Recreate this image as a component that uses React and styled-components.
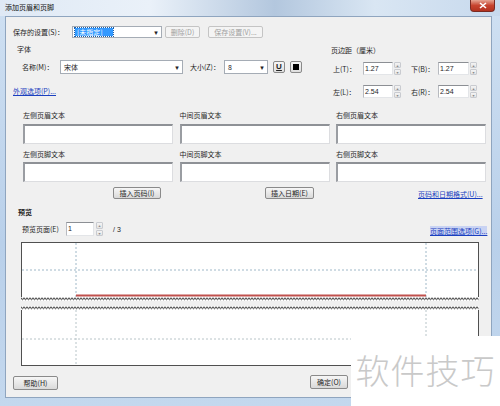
import React from "react"
import styled, { createGlobalStyle } from "styled-components"

const GlobalStyle = createGlobalStyle`
  html, body {
    margin: 0;
    padding: 0;
    background: #fff;
  }
  body {
    font-family: "Noto Sans CJK SC", "DejaVu Sans", sans-serif;
    font-size: 7px;
    color: #1e1e1e;
  }
`

// fine page-break zigzag drawn under/over the preview pages
const Zigzag = ({ width }) => {
  const dark = []
  const light = []
  for (let i = 0; i * 1.5 <= width; i++) {
    const x = i * 1.5
    const y = i % 2 === 0 ? 0.8 : 2.2
    dark.push(`${x},${y}`)
    light.push(`${x},${y + 1}`)
  }
  return (
    <svg width={width} height="4" style={{ display: "block" }}>
      <polyline points={light.join(" ")} fill="none" stroke="#8a8a8a" strokeWidth="0.7" />
      <polyline points={dark.join(" ")} fill="none" stroke="#1a1a1a" strokeWidth="0.9" />
    </svg>
  )
}

const App = () => {
  return (
    <>
      <GlobalStyle />
      <Window>
        <TitleBar>
          <TitleText>添加页眉和页脚</TitleText>
          <CloseButton>
            <svg width="8" height="7" viewBox="0 0 8 7">
              <path d="M1 1 L7 6 M7 1 L1 6" stroke="#fff" strokeWidth="1.6" />
            </svg>
          </CloseButton>
        </TitleBar>

        <Client>
          <SettingsRow>
            <Label w={59}>保存的设置(S)：</Label>
            <Select w={90}>
              <SelectedText>[未指定]</SelectedText>
              <Arrow>▾</Arrow>
            </Select>
            <Button w={35} ml={3} disabled>删除(D)</Button>
            <Button w={55} ml={8} disabled>保存设置(V)...</Button>
          </SettingsRow>

          <TopSection>
            <FontColumn>
              <GroupLabel>字体</GroupLabel>
              <FontRow>
                <Label w={38}>名称(M)：</Label>
                <Select w={123} white>
                  <ValueText>宋体</ValueText>
                  <Arrow>▾</Arrow>
                </Select>
                <Label w={34} ml={7}>大小(Z)：</Label>
                <Select w={44} white>
                  <ValueText>8</ValueText>
                  <Arrow>▾</Arrow>
                </Select>
                <SquareButton ml={5}>
                  <Underlined>U</Underlined>
                </SquareButton>
                <SquareButton ml={5}>
                  <Swatch />
                </SquareButton>
              </FontRow>
              <LinkText>外观选项(P)...</LinkText>
            </FontColumn>

            <MarginColumn>
              <MarginTitle>页边距（厘米）</MarginTitle>
              <MarginRow>
                <Label w={30}>上(T)：</Label>
                <NumInput w={30}>1.27</NumInput>
                <Spinner />
                <Label w={27} ml={10}>下(B)：</Label>
                <NumInput w={31}>1.27</NumInput>
                <Spinner />
              </MarginRow>
              <MarginRow second>
                <Label w={30}>左(L)：</Label>
                <NumInput w={30}>2.54</NumInput>
                <Spinner />
                <Label w={27} ml={10}>右(R)：</Label>
                <NumInput w={31}>2.54</NumInput>
                <Spinner />
              </MarginRow>
            </MarginColumn>
          </TopSection>

          <TextGrid>
            <FieldLabel>左侧页眉文本</FieldLabel>
            <FieldLabel>中间页眉文本</FieldLabel>
            <FieldLabel>右侧页眉文本</FieldLabel>
            <TextBox />
            <TextBox />
            <TextBox />
            <FieldLabel>左侧页脚文本</FieldLabel>
            <FieldLabel>中间页脚文本</FieldLabel>
            <FieldLabel>右侧页脚文本</FieldLabel>
            <TextBox />
            <TextBox />
            <TextBox />
          </TextGrid>

          <InsertRow>
            <Button w={48} ml={107}>插入页码(I)</Button>
            <Button w={49} ml={104}>插入日期(E)</Button>
            <LinkText inline ml={104}>页码和日期格式(U)...</LinkText>
          </InsertRow>

          <PreviewTitle>预览</PreviewTitle>

          <PageRow>
            <Label w={44}>预览页面(E)</Label>
            <NumInput w={28} tall>1</NumInput>
            <Spinner tall ml={2} />
            <Slash>/ 3</Slash>
            <LinkText inline selected ml={305}>页面范围选项(G)...</LinkText>
          </PageRow>

          <PreviewBox>
            <PageSvgTop width="456" height="54">
              <line x1="54" y1="0" x2="54" y2="54" stroke="#9fb8c8" strokeDasharray="2 2" />
              <line x1="404" y1="0" x2="404" y2="54" stroke="#9fb8c8" strokeDasharray="2 2" />
              <line x1="0" y1="27" x2="456" y2="27" stroke="#9fb8c8" strokeDasharray="2 2" />
              <line x1="54" y1="52.5" x2="404" y2="52.5" stroke="#c0504d" strokeWidth="2" />
            </PageSvgTop>
            <Zigzag width={458} />
          </PreviewBox>

          <PreviewBox second>
            <Zigzag width={458} />
            <PageSvgBottom width="456" height="55">
              <line x1="54" y1="0" x2="54" y2="55" stroke="#b8c4c8" strokeDasharray="2 2" />
              <line x1="404" y1="0" x2="404" y2="55" stroke="#b8c4c8" strokeDasharray="2 2" />
              <line x1="0" y1="29" x2="456" y2="29" stroke="#b8c4c8" strokeDasharray="2 2" />
            </PageSvgBottom>
          </PreviewBox>

          <BottomRow>
            <Button w={45} h={14}>帮助(H)</Button>
            <Button w={38} h={14} ml={252} up>确定(O)</Button>
          </BottomRow>
        </Client>

        <Watermark>软件技巧</Watermark>
      </Window>
    </>
  )
}

const Window = styled.div`
  position: relative;
  width: 500px;
  height: 406px;
  overflow: hidden;
  display: flex;
  flex-direction: column;
  background: linear-gradient(to bottom, #cfe0f2, #b9d0ea 60%, #c4d8ee);
`

const TitleBar = styled.div`
  height: 16px;
  flex-shrink: 0;
  display: flex;
  align-items: flex-start;
  justify-content: space-between;
  padding-left: 5px;
  background: linear-gradient(
    to right,
    #dfe9f5 0%,
    #eaf1f9 30%,
    #b3c7de 55%,
    #d9e6f3 75%,
    #c7d9ed 100%
  );
`

const TitleText = styled.span`
  font-size: 7px;
  line-height: 15px;
  color: #111;
`

const CloseButton = styled.div`
  width: 25px;
  height: 12px;
  margin-right: 5px;
  border: 1px solid #7a2a22;
  border-top: none;
  border-radius: 0 0 4px 4px;
  background: linear-gradient(to bottom, #e6a593, #c7432e 50%, #b3321f);
  display: flex;
  align-items: center;
  justify-content: center;
  box-sizing: border-box;
`

const Client = styled.div`
  margin-left: 5px;
  margin-right: 8px;
  height: 382px;
  background: #f0f0f0;
  border: 1px solid #8fa5bf;
  box-sizing: border-box;
  display: flex;
  flex-direction: column;
`

const SettingsRow = styled.div`
  display: flex;
  align-items: center;
  height: 12px;
  margin-top: 9px;
  padding-left: 7px;
`

const Label = styled.span`
  width: ${p => p.w}px;
  margin-left: ${p => p.ml || 0}px;
  flex-shrink: 0;
  white-space: nowrap;
  font-size: 7px;
`

const Select = styled.div`
  width: ${p => p.w}px;
  height: ${p => (p.white ? 14 : 12)}px;
  box-sizing: border-box;
  border: 1px solid #a5acb5;
  background: #fff;
  display: flex;
  align-items: center;
  padding-left: 2px;
  flex-shrink: 0;
`

const SelectedText = styled.span`
  background: #3399ff;
  color: #fff;
  padding: 0 2px;
  width: 34px;
  line-height: 8px;
  font-size: 7px;
  outline: 1px dotted #1b5ea8;
`

const ValueText = styled.span`
  font-size: 7px;
  padding-left: 1px;
`

const Arrow = styled.span`
  margin-left: auto;
  width: 10px;
  text-align: center;
  font-size: 7px;
  color: #222;
`

const Button = styled.div`
  width: ${p => p.w}px;
  height: ${p => p.h || 12}px;
  margin-left: ${p => p.ml || 0}px;
  margin-top: ${p => (p.up ? -2 : 0)}px;
  box-sizing: border-box;
  flex-shrink: 0;
  border: 1px solid ${p => (p.disabled ? "#c4c4c4" : "#8a8a8a")};
  border-radius: 2px;
  background: ${p =>
    p.disabled
      ? "#f4f4f4"
      : "linear-gradient(to bottom, #f6f6f6, #e8e8e8 50%, #d9d9d9)"};
  color: ${p => (p.disabled ? "#a0a0a0" : "#1e1e1e")};
  font-size: 7px;
  display: flex;
  align-items: center;
  justify-content: center;
  white-space: nowrap;
`

const TopSection = styled.div`
  display: flex;
`

const FontColumn = styled.div`
  width: 324px;
  display: flex;
  flex-direction: column;
`

const GroupLabel = styled.div`
  margin-top: 7px;
  margin-left: 11px;
  height: 8px;
  line-height: 8px;
  font-size: 7px;
`

const FontRow = styled.div`
  display: flex;
  align-items: center;
  margin-top: 7px;
  padding-left: 16px;
  height: 14px;
`

const SquareButton = styled.div`
  width: 12px;
  height: 12px;
  margin-left: ${p => p.ml || 0}px;
  box-sizing: border-box;
  border: 1px solid #8a8a8a;
  border-radius: 2px;
  background: linear-gradient(to bottom, #f6f6f6, #dedede);
  display: flex;
  align-items: center;
  justify-content: center;
  flex-shrink: 0;
`

const Underlined = styled.span`
  font-family: "Liberation Sans", sans-serif;
  font-weight: bold;
  font-size: 8px;
  line-height: 8px;
  text-decoration: underline;
  color: #222;
`

const Swatch = styled.span`
  width: 6px;
  height: 6px;
  background: #000;
`

const LinkText = styled.span`
  display: ${p => (p.inline ? "inline-block" : "block")};
  margin-left: ${p => (p.ml !== undefined ? p.ml : 7)}px;
  margin-top: ${p => (p.inline ? 0 : 12)}px;
  font-size: 7px;
  color: #1a3fbf;
  text-decoration: underline;
  white-space: nowrap;
  background: ${p => (p.selected ? "#c9d3f3" : "transparent")};
  align-self: ${p => (p.inline ? "flex-end" : "auto")};
`

const MarginColumn = styled.div`
  display: flex;
  flex-direction: column;
  padding-left: 1px;
`

const MarginTitle = styled.div`
  margin-top: 8px;
  height: 8px;
  line-height: 8px;
  font-size: 7px;
`

const MarginRow = styled.div`
  display: flex;
  align-items: center;
  height: 13px;
  margin-top: ${p => (p.second ? 10 : 8)}px;
  padding-left: 2px;
`

const NumInput = styled.div`
  width: ${p => p.w}px;
  height: ${p => (p.tall ? 14 : 13)}px;
  box-sizing: border-box;
  flex-shrink: 0;
  background: #fff;
  border-top: 1px solid #8c8f94;
  border-left: 1px solid #b7bac0;
  border-right: 1px solid #e3e5e8;
  border-bottom: 1px solid #e3e5e8;
  font-family: "Liberation Sans", sans-serif;
  font-size: 7px;
  line-height: 11px;
  padding-left: 1px;
`

const SpinBox = styled.div`
  width: 7px;
  height: ${p => (p.tall ? 14 : 13)}px;
  margin-left: ${p => (p.ml !== undefined ? p.ml : 1)}px;
  flex-shrink: 0;
  display: flex;
  flex-direction: column;
  gap: 1px;
`

const SpinHalf = styled.div`
  flex: 1;
  border: 1px solid #c9cbd0;
  border-radius: 1px;
  background: linear-gradient(to bottom, #f4f4f4, #e4e4e4);
  display: flex;
  align-items: center;
  justify-content: center;
  font-size: 4px;
  line-height: 4px;
  color: #888;
`

const Spinner = ({ tall, ml }) => (
  <SpinBox tall={tall} ml={ml}>
    <SpinHalf>▴</SpinHalf>
    <SpinHalf>▾</SpinHalf>
  </SpinBox>
)

const TextGrid = styled.div`
  display: grid;
  grid-template-columns: 150px 150px 150px;
  grid-template-rows: 8px 20px 8px 20px;
  column-gap: 6.5px;
  row-gap: 5px;
  margin-top: 13px;
  padding-left: 17px;
  & > :nth-child(7),
  & > :nth-child(8),
  & > :nth-child(9) {
    margin-top: 1px;
  }
`

const FieldLabel = styled.div`
  font-size: 7px;
  line-height: 8px;
  white-space: nowrap;
`

const TextBox = styled.div`
  background: #fff;
  box-sizing: border-box;
  border-top: 2px solid #8e9196;
  border-left: 2px solid #9a9da2;
  border-right: 1px solid #dcdde0;
  border-bottom: 1px solid #dcdde0;
`

const InsertRow = styled.div`
  display: flex;
  align-items: center;
  height: 12px;
  margin-top: 5px;
`

const PreviewTitle = styled.div`
  margin-top: 9px;
  margin-left: 12px;
  height: 8px;
  line-height: 8px;
  font-weight: bold;
  font-size: 7px;
`

const PageRow = styled.div`
  display: flex;
  align-items: center;
  height: 14px;
  margin-top: 6px;
  padding-left: 16px;
`

const Slash = styled.span`
  margin-left: 10px;
  font-family: "Liberation Sans", sans-serif;
  font-size: 7px;
  width: 12px;
`

const PreviewBox = styled.div`
  width: 458px;
  margin-left: 15px;
  margin-top: ${p => (p.second ? 5 : 6)}px;
  box-sizing: border-box;
  background: #fff;
  display: flex;
  flex-direction: column;
`

const PageSvgTop = styled.svg`
  display: block;
  border: 1px solid #505050;
  border-bottom: none;
`

const PageSvgBottom = styled.svg`
  display: block;
  border: 1px solid #505050;
  border-top: none;
`

const BottomRow = styled.div`
  display: flex;
  align-items: center;
  height: 14px;
  margin-top: 10px;
  padding-left: 7px;
`

const Watermark = styled.div`
  position: absolute;
  left: 351px;
  top: 336px;
  width: 149px;
  height: 70px;
  background: #fff;
  display: flex;
  align-items: center;
  justify-content: center;
  font-family: "Noto Sans CJK SC", sans-serif;
  font-weight: 300;
  font-size: 34px;
  letter-spacing: 1px;
  color: #c9c9c9;
  padding-bottom: 4px;
  box-sizing: border-box;
`

export default App
